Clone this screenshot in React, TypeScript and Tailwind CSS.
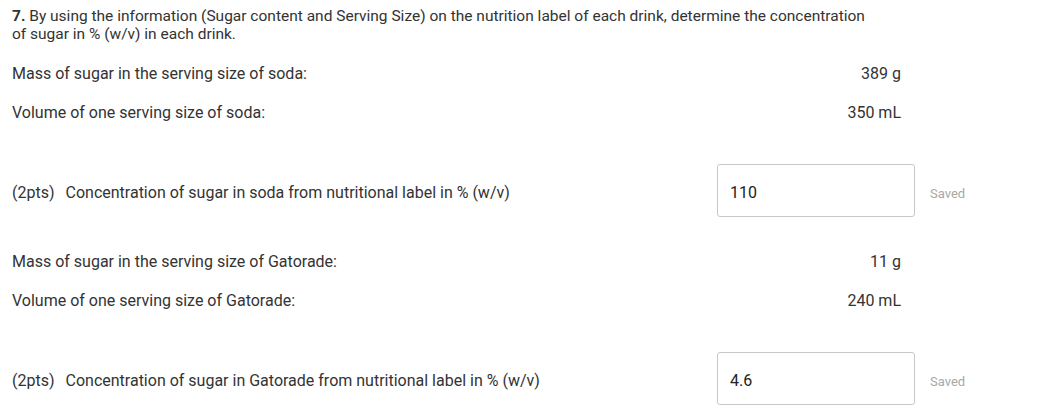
import React from "react"

interface Drink {
  name: string
  mass: string
  volume: string
  answer: string
}

const DRINKS: Drink[] = [
  { name: "soda", mass: "389 g", volume: "350 mL", answer: "110" },
  { name: "Gatorade", mass: "11 g", volume: "240 mL", answer: "4.6" },
]

function ValueRow({ label, value, className }: { label: string; value: string; className?: string }) {
  return (
    <div className={`flex w-[889px] justify-between leading-[18px] ${className ?? ""}`}>
      <span>{label}</span>
      <span>{value}</span>
    </div>
  )
}

function AnswerRow({ drink, className }: { drink: Drink; className?: string }) {
  return (
    <div className={`flex items-baseline ${className ?? ""}`}>
      <div className="w-[705px] leading-[18px]">
        <span>(2pts)</span>
        <span className="ml-[11px]">
          Concentration of sugar in {drink.name} from nutritional label in % (w/v)
        </span>
      </div>
      <div className="h-[53px] w-[198px] rounded-[3px] border border-[#c8c8c8] bg-white pl-3 pt-[19px] leading-[18px] text-[#222]">
        {drink.answer}
      </div>
      <span className="ml-[15px] text-[13px] text-[#a8a8a8]">Saved</span>
    </div>
  )
}

export default function App() {
  return (
    <div
      className="min-h-screen bg-white pl-3 pt-[7px] text-[16px] text-[#333]"
      style={{ fontFamily: "Roboto, 'Liberation Sans', sans-serif" }}
    >
      <p className="w-[870px] text-[15.5px] leading-[18px]">
        <span className="font-bold">7.</span> By using the information (Sugar content and Serving
        Size) on the nutrition label of each drink, determine the concentration of sugar in % (w/v)
        in each drink.
      </p>

      {DRINKS.map((drink, i) => (
        <div key={drink.name} className={i === 0 ? "mt-[22px]" : "mt-[36px]"}>
          <ValueRow label={`Mass of sugar in the serving size of ${drink.name}:`} value={drink.mass} />
          <ValueRow
            label={`Volume of one serving size of ${drink.name}:`}
            value={drink.volume}
            className="mt-[21px]"
          />
          <AnswerRow drink={drink} className="mt-[42px]" />
        </div>
      ))}
    </div>
  )
}
